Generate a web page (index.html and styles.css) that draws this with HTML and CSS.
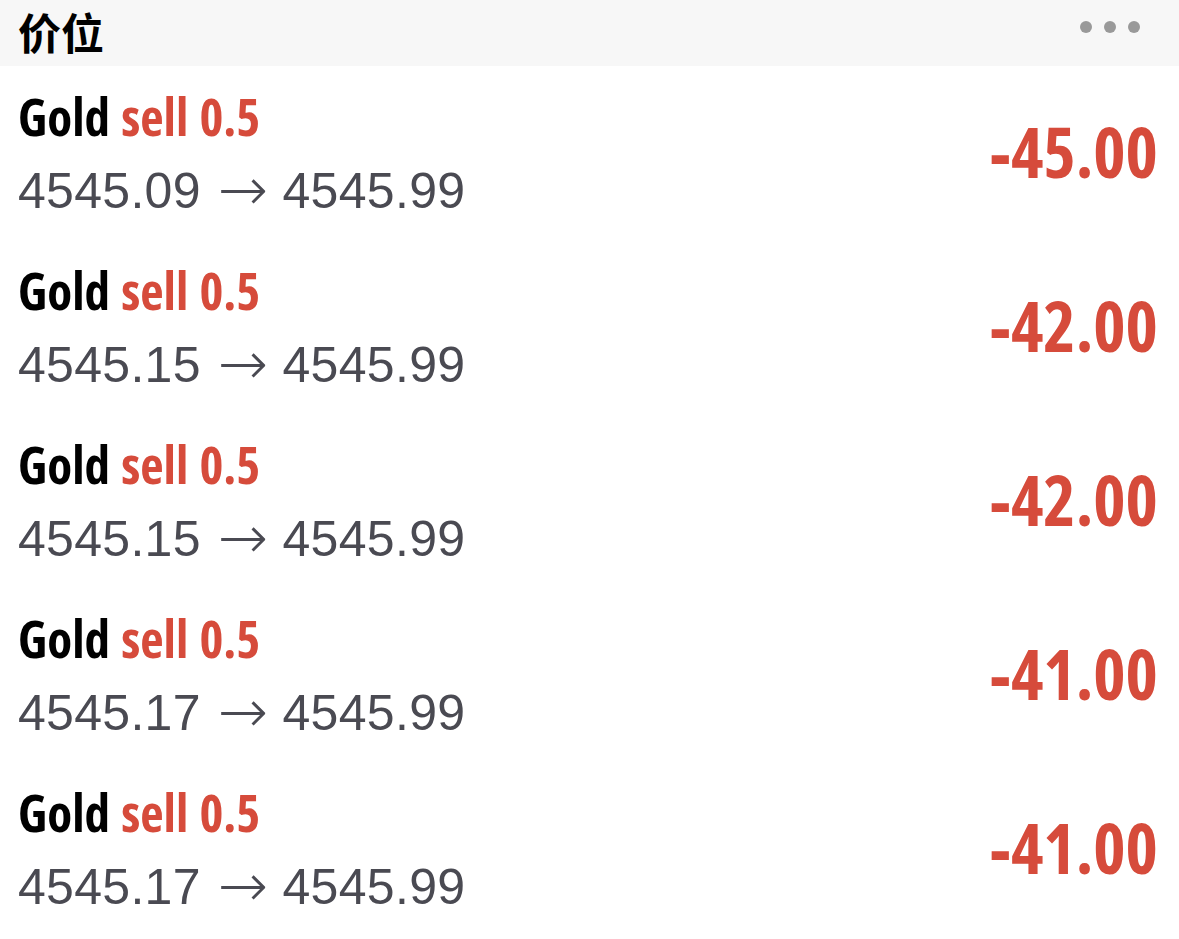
FILE: index.html
```html
<!DOCTYPE html>
<html lang="zh-CN">
<head>
  <meta charset="UTF-8" />
  <title>价位</title>
  <link rel="stylesheet" href="styles.css">
</head>
<body>
  <!-- 标题栏 -->
  <div class="header">
    <div class="header-title">价位</div>
    <div class="header-more">
      <span class="dot"></span>
      <span class="dot"></span>
      <span class="dot"></span>
    </div>
  </div>

  <!-- 持仓列表 -->
  <div class="list">
    <div class="row">
      <div class="row-info">
        <div class="row-title">Gold <span class="side">sell 0.5</span></div>
        <div class="row-price">4545.09 <span class="arrow">→</span> 4545.99</div>
      </div>
      <div class="row-profit">-45.00</div>
    </div>
    <div class="row">
      <div class="row-info">
        <div class="row-title">Gold <span class="side">sell 0.5</span></div>
        <div class="row-price">4545.15 <span class="arrow">→</span> 4545.99</div>
      </div>
      <div class="row-profit">-42.00</div>
    </div>
    <div class="row">
      <div class="row-info">
        <div class="row-title">Gold <span class="side">sell 0.5</span></div>
        <div class="row-price">4545.15 <span class="arrow">→</span> 4545.99</div>
      </div>
      <div class="row-profit">-42.00</div>
    </div>
    <div class="row">
      <div class="row-info">
        <div class="row-title">Gold <span class="side">sell 0.5</span></div>
        <div class="row-price">4545.17 <span class="arrow">→</span> 4545.99</div>
      </div>
      <div class="row-profit">-41.00</div>
    </div>
    <div class="row">
      <div class="row-info">
        <div class="row-title">Gold <span class="side">sell 0.5</span></div>
        <div class="row-price">4545.17 <span class="arrow">→</span> 4545.99</div>
      </div>
      <div class="row-profit">-41.00</div>
    </div>
  </div>
</body>
</html>
```

FILE: styles.css
```css
/* 全局样式重置 */
* {
  box-sizing: border-box;
  margin: 0;
  padding: 0;
}

body {
  font-family: "Liberation Sans", "Noto Sans CJK SC", sans-serif;
  background-color: #ffffff;
  overflow: hidden;
}

/* 标题栏 */
.header {
  height: 66px;
  background: #f7f7f7;
  display: flex;
  align-items: flex-start;
  justify-content: space-between;
  padding: 0 39px 0 18px;
}

.header-title {
  font-family: "Noto Sans CJK SC", sans-serif;
  font-size: 43px;
  font-weight: 700;
  color: #000;
  line-height: normal;
}

.header-more {
  display: flex;
  gap: 12px;
  margin-top: 21px;
}

.dot {
  width: 12px;
  height: 12px;
  border-radius: 50%;
  background: #999999;
}

/* 列表行 */
.row {
  height: 174px;
  display: flex;
  align-items: center;
  justify-content: space-between;
  padding: 0 21px 0 18px;
}

.row-info {
  margin-top: 3px;
}

.row-title {
  font-family: "Open Sans", sans-serif;
  font-stretch: 75%;
  font-weight: 700;
  font-size: 51px;
  line-height: 73px;
  word-spacing: 2px;
  color: #000;
}

.side {
  color: #d64b3b;
}

.row-price {
  font-size: 50px;
  line-height: 76px;
  letter-spacing: 0.3px;
  color: #4a4a52;
}

.arrow {
  font-family: "DejaVu Sans", sans-serif;
  font-weight: 200;
  font-size: 60px;
  line-height: 0;
  letter-spacing: 0;
  margin-left: 3px;
  vertical-align: -2px;
}

.row-profit {
  font-family: "Open Sans", sans-serif;
  font-stretch: 75%;
  font-weight: 700;
  font-size: 69px;
  color: #d64b3b;
  padding-bottom: 4px;
}
```
